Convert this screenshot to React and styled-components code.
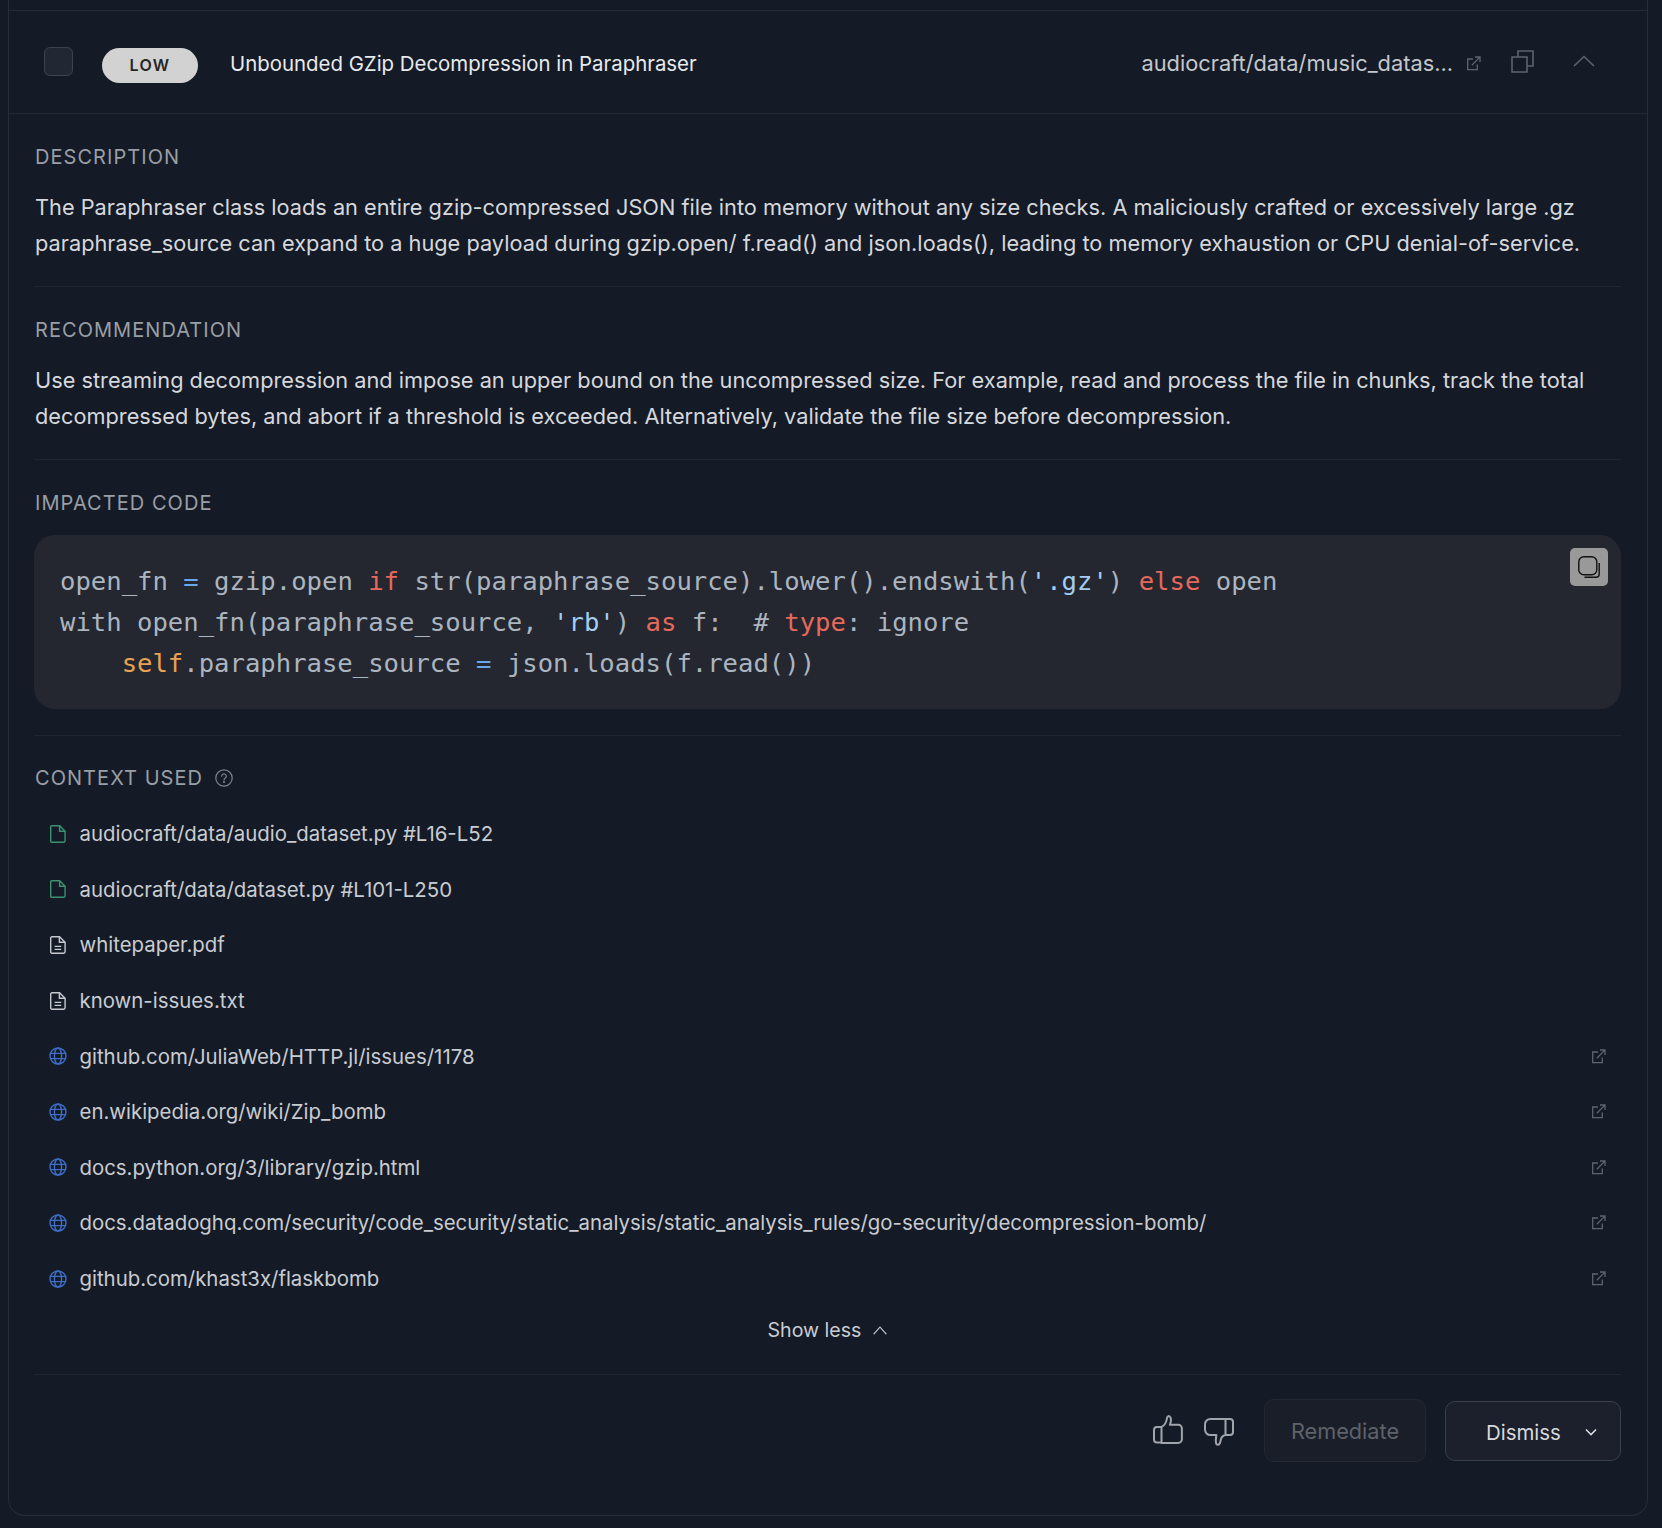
import React from "react";
import styled, { createGlobalStyle } from "styled-components";

const GlobalStyle = createGlobalStyle`
  html, body {
    margin: 0;
    background: #141b27;
  }
  * {
    box-sizing: border-box;
  }
`;

const contextItems = [
  { kind: "repo", label: "audiocraft/data/audio_dataset.py #L16-L52" },
  { kind: "repo", label: "audiocraft/data/dataset.py #L101-L250" },
  { kind: "file", label: "whitepaper.pdf" },
  { kind: "file", label: "known-issues.txt" },
  { kind: "web", label: "github.com/JuliaWeb/HTTP.jl/issues/1178" },
  { kind: "web", label: "en.wikipedia.org/wiki/Zip_bomb" },
  { kind: "web", label: "docs.python.org/3/library/gzip.html" },
  {
    kind: "web",
    label:
      "docs.datadoghq.com/security/code_security/static_analysis/static_analysis_rules/go-security/decompression-bomb/",
  },
  { kind: "web", label: "github.com/khast3x/flaskbomb" },
];

function ExternalIcon({ size = 15 }) {
  return (
    <svg width={size} height={size} viewBox="0 0 15 15" fill="none" stroke="#5f656e" strokeWidth="1.3">
      <path d="M7 3H1.7v10.6h9.6V8.5" />
      <path d="M5.8 9.2 13.6 1.4M9 1h5v5" />
    </svg>
  );
}

function RepoFileIcon() {
  return (
    <svg width="16" height="18" viewBox="0 0 16 18" fill="none" stroke="#3b9170" strokeWidth="1.4">
      <path d="M1.7.8h8l5.4 5.4v9.6a1.4 1.4 0 0 1-1.4 1.4H1.7a1 1 0 0 1-1-1V1.8a1 1 0 0 1 1-1Z" />
      <path d="M9.6.8v5.4h5.5" />
    </svg>
  );
}

function DocIcon() {
  return (
    <svg width="16" height="18" viewBox="0 0 16 18" fill="none" stroke="#c5c8cd" strokeWidth="1.4">
      <path d="M1.9.8h7.6l5.6 5.4v9.4a1.6 1.6 0 0 1-1.6 1.6H1.9a1.2 1.2 0 0 1-1.2-1.2V2a1.2 1.2 0 0 1 1.2-1.2Z" />
      <path d="M9.4.8v5.4h5.6M4.6 10.4h6.6M4.6 13.4h6.6" />
    </svg>
  );
}

function GlobeIcon() {
  return (
    <svg width="18" height="18" viewBox="0 0 18 18" fill="none" stroke="#3f6cc4" strokeWidth="1.4">
      <circle cx="9" cy="9" r="8" />
      <ellipse cx="9" cy="9" rx="3.6" ry="8" />
      <path d="M1.4 6.4h15.2M1.4 11.6h15.2" />
    </svg>
  );
}

function HelpIcon() {
  return (
    <svg width="18" height="18" viewBox="0 0 18 18" fill="none" stroke="#7d828a" strokeWidth="1.2">
      <circle cx="9" cy="9" r="8.2" />
      <path d="M6.7 7.2a2.3 2.3 0 1 1 3.6 1.9c-.8.5-1.3 1-1.3 1.9" strokeLinecap="round" />
      <circle cx="9" cy="13" r=".5" />
    </svg>
  );
}

function CopyOutlineIcon() {
  return (
    <svg width="23" height="23" viewBox="0 0 23 23" fill="none" stroke="#5d636c" strokeWidth="1.6">
      <path d="M1 7h15v15H1z" />
      <path d="M7 7V1h15v15h-6" />
    </svg>
  );
}

function ChevronUpIcon({ size = 22, color = "#5d636c", height = 12 }) {
  return (
    <svg width={size} height={height} viewBox="0 0 22 12" fill="none" stroke={color} strokeWidth="1.6" preserveAspectRatio="none">
      <path d="M1 11 11 1.5 21 11" />
    </svg>
  );
}

function CopyCodeIcon() {
  return (
    <svg width="22" height="22" viewBox="0 0 22 22" fill="none" stroke="#111" strokeWidth="1.4">
      <rect x=".8" y=".8" width="18" height="18" rx="5" />
      <path d="M21.2 7v11a3.2 3.2 0 0 1-3.2 3.2H6.5" />
    </svg>
  );
}

function ThumbUpIcon() {
  return (
    <svg width="30" height="29" viewBox="0 0 30 29" fill="none" stroke="#a1a4aa" strokeWidth="2" strokeLinejoin="round">
      <path d="M8.5 27.5H4a3 3 0 0 1-3-3V15a3 3 0 0 1 3-3h4.5" />
      <path d="M8.5 27.5V12c3-1.5 5-5 5.5-9 .2-1.6 1.6-2.4 2.7-1.5 1.6 1.3 1.6 4.5.2 8.3h8.4a3.6 3.6 0 0 1 3.6 3.6v10.8a3.8 3.8 0 0 1-3.8 3.8H8.5Z" />
    </svg>
  );
}

function ThumbDownIcon() {
  return (
    <svg width="30" height="28" viewBox="0 0 30 28" fill="none" stroke="#a1a4aa" strokeWidth="2" strokeLinejoin="round">
      <path d="M21.5 1H26a3 3 0 0 1 3 3v10a3 3 0 0 1-3 3h-4.5" />
      <path d="M21.5 1v16c-3 .6-4.6 2.4-5 6-.2 1.8-1 3.8-2.8 3.8-1.8 0-2.4-2.4-1.4-9.8H6.4A5.4 5.4 0 0 1 1 11.6V6.4A5.4 5.4 0 0 1 6.4 1h15.1Z" />
    </svg>
  );
}

function ChevronDownIcon() {
  return (
    <svg width="12" height="8" viewBox="0 0 12 8" fill="none" stroke="#d6d8dc" strokeWidth="1.6">
      <path d="M1 1.5 6 6.5l5-5" />
    </svg>
  );
}

function ItemIcon({ kind }) {
  if (kind === "repo") return <RepoFileIcon />;
  if (kind === "file") return <DocIcon />;
  return <GlobeIcon />;
}

export default function App() {
  return (
    <>
      <GlobalStyle />
      <Card>
        <Header>
          <Checkbox />
          <Badge>LOW</Badge>
          <Title>Unbounded GZip Decompression in Paraphraser</Title>
          <PathLink>
            <PathText>audiocraft/data/music_datas...</PathText>
            <ExternalIcon />
          </PathLink>
          <HeaderIcon $gap={30}>
            <CopyOutlineIcon />
          </HeaderIcon>
          <HeaderIcon $gap={39}>
            <ChevronUpIcon />
          </HeaderIcon>
        </Header>

        <Section>
          <Label>DESCRIPTION</Label>
          <Body>
            The Paraphraser class loads an entire gzip-compressed JSON file into memory without any size checks. A
            maliciously crafted or excessively large .gz paraphrase_source can expand to a huge payload during
            gzip.open/ f.read() and json.loads(), leading to memory exhaustion or CPU denial-of-service.
          </Body>
        </Section>

        <Section>
          <Label>RECOMMENDATION</Label>
          <Body>
            Use streaming decompression and impose an upper bound on the uncompressed size. For example, read and
            process the file in chunks, track the total decompressed bytes, and abort if a threshold is exceeded.
            Alternatively, validate the file size before decompression.
          </Body>
        </Section>

        <CodeSection>
          <Label>IMPACTED CODE</Label>
          <CodeBlock>
            <CopyButton>
              <CopyCodeIcon />
            </CopyButton>
            <Code>
              open_fn <Op>=</Op> gzip.open <Kw>if</Kw> str(paraphrase_source).lower().endswith(<Str>'.gz'</Str>){" "}
              <Kw>else</Kw> open{"\n"}
              with open_fn(paraphrase_source, <Str>'rb'</Str>) <Kw>as</Kw> f:{"  "}# <Kw>type</Kw>: ignore{"\n"}
              {"    "}
              <Self>self</Self>.paraphrase_source <Op>=</Op> json.loads(f.read())
            </Code>
          </CodeBlock>
        </CodeSection>

        <ContextSection>
          <ContextLabel>
            <Label>CONTEXT USED</Label>
            <HelpIcon />
          </ContextLabel>
          <ContextList>
            {contextItems.map((item) => (
              <ContextRow key={item.label}>
                <IconSlot>
                  <ItemIcon kind={item.kind} />
                </IconSlot>
                <RowText>{item.label}</RowText>
                {item.kind === "web" && <ExternalIcon />}
              </ContextRow>
            ))}
          </ContextList>
          <ShowLess>
            Show less
            <ChevronUpIcon size={14} height={9} color="#c5c8cd" />
          </ShowLess>
        </ContextSection>

        <Footer>
          <FeedbackIcon $top={-3}>
            <ThumbUpIcon />
          </FeedbackIcon>
          <FeedbackIcon $top={2}>
            <ThumbDownIcon />
          </FeedbackIcon>
          <RemediateButton>Remediate</RemediateButton>
          <DismissButton>
            Dismiss
            <ChevronDownIcon />
          </DismissButton>
        </Footer>
      </Card>
    </>
  );
}

const Card = styled.div`
  width: 1640px;
  height: 1516px;
  margin-left: 8px;
  padding-top: 10px;
  border: 1px solid #272e3a;
  border-top: none;
  border-radius: 0 0 17px 17px;
  font-family: Inter, "Noto Sans", sans-serif;
`;

const Header = styled.div`
  display: flex;
  align-items: center;
  height: 104px;
  padding: 4px 52px 0 35px;
  border-top: 1px solid #232a36;
  border-bottom: 1px solid #232a36;
`;

const Checkbox = styled.div`
  width: 29px;
  height: 29px;
  margin-bottom: 6px;
  background: #222833;
  border: 1px solid #3d434e;
  border-radius: 6px;
`;

const Badge = styled.div`
  display: flex;
  align-items: center;
  justify-content: center;
  width: 96px;
  height: 35px;
  margin-left: 29px;
  margin-top: 2px;
  background: #d2d2d2;
  border-radius: 18px;
  color: #262626;
  font-size: 16px;
  font-weight: 600;
  letter-spacing: 1.3px;
`;

const Title = styled.div`
  flex: 1;
  margin: 0 0 2px 32px;
  color: #e8eaed;
  font-size: 20.4px;
`;

const PathLink = styled.div`
  display: flex;
  align-items: center;
  gap: 13px;
  margin-bottom: 2px;
`;

const PathText = styled.span`
  color: #c4c7cc;
  font-size: 21.8px;
`;

const HeaderIcon = styled.div`
  display: flex;
  margin-left: ${(p) => p.$gap}px;
  margin-bottom: 6px;
`;

const Section = styled.section`
  margin: 0 26px 0 25px;
  padding: 29px 0 25px;
  border-bottom: 1px solid #1f2632;
`;

const Label = styled.div`
  height: 28px;
  padding-left: 1px;
  color: #9a9ea5;
  font-size: 20px;
  line-height: 28px;
  letter-spacing: 1.05px;
`;

const Body = styled.p`
  margin: 18px 0 0;
  padding-left: 1px;
  color: #d6d8dc;
  font-size: 21.75px;
  line-height: 36px;
`;

const CodeSection = styled(Section)`
  padding-bottom: 26px;
`;

const CodeBlock = styled.div`
  position: relative;
  margin-top: 18px;
  padding: 26px 26px 25px;
  background: #24272f;
  border-radius: 21px;
`;

const CopyButton = styled.div`
  position: absolute;
  top: 13px;
  right: 13px;
  display: flex;
  align-items: center;
  justify-content: center;
  width: 38px;
  height: 38px;
  background: #999;
  border-radius: 5px;
`;

const Code = styled.pre`
  margin: 0;
  color: #abb5c0;
  font-family: "DejaVu Sans Mono", monospace;
  font-size: 25.6px;
  line-height: 41px;
`;

const Kw = styled.span`
  color: #e5695c;
`;

const Op = styled.span`
  color: #6aa7f0;
`;

const Str = styled.span`
  color: #a3cdf5;
`;

const Self = styled.span`
  color: #e8a253;
`;

const ContextSection = styled(Section)`
  padding: 28px 0 30px;
`;

const ContextLabel = styled.div`
  display: flex;
  align-items: center;
  gap: 12px;
`;

const ContextList = styled.div`
  margin-top: 14px;
`;

const ContextRow = styled.div`
  display: flex;
  align-items: center;
  height: 55.6px;
  padding: 0 15px 0 15px;
`;

const IconSlot = styled.div`
  display: flex;
  justify-content: center;
  width: 18px;
  margin-right: 12.5px;
`;

const RowText = styled.span`
  flex: 1;
  color: #c9ccd1;
  font-size: 20.4px;
`;

const ShowLess = styled.div`
  display: flex;
  align-items: center;
  justify-content: center;
  gap: 12px;
  height: 28px;
  margin-top: 10px;
  color: #c9ccd1;
  font-size: 19.6px;
`;

const Footer = styled.div`
  display: flex;
  align-items: center;
  justify-content: flex-end;
  margin: 24px 26px 0 0;
`;

const FeedbackIcon = styled.div`
  display: flex;
  margin-right: 21px;
  margin-top: ${(p) => p.$top}px;
  &:nth-child(2) {
    margin-right: 30px;
  }
`;

const RemediateButton = styled.div`
  display: flex;
  align-items: center;
  justify-content: center;
  width: 162px;
  height: 63px;
  background: #191e29;
  border: 1px solid #232833;
  border-radius: 10px;
  color: #5e626a;
  font-size: 21.7px;
`;

const DismissButton = styled.div`
  display: flex;
  align-items: center;
  justify-content: space-between;
  width: 176px;
  height: 60px;
  margin: 1px 0 0 19px;
  padding: 2px 23px 0 40px;
  background: #1b202c;
  border: 1px solid #3a404b;
  border-radius: 10px;
  color: #d6d8dc;
  font-size: 20.4px;
`;
